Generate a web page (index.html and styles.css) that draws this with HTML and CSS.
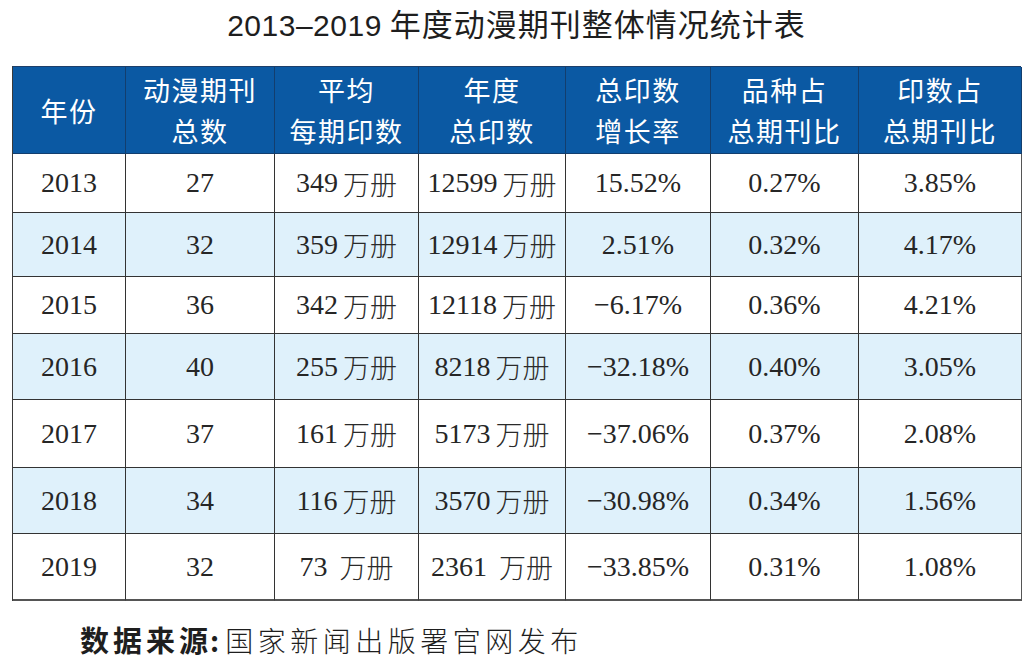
FILE: index.html
```html
<!DOCTYPE html>
<html lang="zh-CN">
<head>
<meta charset="utf-8">
<title>2013–2019年度动漫期刊整体情况统计表</title>
<link rel="stylesheet" href="styles.css">
</head>
<body>
<div class="page">
  <h1 class="title"><span class="num">2013–2019</span> 年度动漫期刊整体情况统计表</h1>
  <div class="table">
    <div class="row head">
      <div class="cell">年份</div>
      <div class="cell">动漫期刊<br>总数</div>
      <div class="cell">平均<br>每期印数</div>
      <div class="cell">年度<br>总印数</div>
      <div class="cell">总印数<br>增长率</div>
      <div class="cell">品种占<br>总期刊比</div>
      <div class="cell">印数占<br>总期刊比</div>
    </div>
    <div class="row">
      <div class="cell">2013</div><div class="cell">27</div>
      <div class="cell">349<span class="u">万册</span></div>
      <div class="cell">12599<span class="u">万册</span></div>
      <div class="cell">15.52%</div><div class="cell">0.27%</div><div class="cell">3.85%</div>
    </div>
    <div class="row alt">
      <div class="cell">2014</div><div class="cell">32</div>
      <div class="cell">359<span class="u">万册</span></div>
      <div class="cell">12914<span class="u">万册</span></div>
      <div class="cell">2.51%</div><div class="cell">0.32%</div><div class="cell">4.17%</div>
    </div>
    <div class="row">
      <div class="cell">2015</div><div class="cell">36</div>
      <div class="cell">342<span class="u">万册</span></div>
      <div class="cell">12118<span class="u">万册</span></div>
      <div class="cell">−6.17%</div><div class="cell">0.36%</div><div class="cell">4.21%</div>
    </div>
    <div class="row alt">
      <div class="cell">2016</div><div class="cell">40</div>
      <div class="cell">255<span class="u">万册</span></div>
      <div class="cell">8218<span class="u">万册</span></div>
      <div class="cell">−32.18%</div><div class="cell">0.40%</div><div class="cell">3.05%</div>
    </div>
    <div class="row">
      <div class="cell">2017</div><div class="cell">37</div>
      <div class="cell">161<span class="u">万册</span></div>
      <div class="cell">5173<span class="u">万册</span></div>
      <div class="cell">−37.06%</div><div class="cell">0.37%</div><div class="cell">2.08%</div>
    </div>
    <div class="row alt">
      <div class="cell">2018</div><div class="cell">34</div>
      <div class="cell">116<span class="u">万册</span></div>
      <div class="cell">3570<span class="u">万册</span></div>
      <div class="cell">−30.98%</div><div class="cell">0.34%</div><div class="cell">1.56%</div>
    </div>
    <div class="row">
      <div class="cell">2019</div><div class="cell">32</div>
      <div class="cell">73<span class="u wide">万册</span></div>
      <div class="cell">2361<span class="u wide">万册</span></div>
      <div class="cell">−33.85%</div><div class="cell">0.31%</div><div class="cell">1.08%</div>
    </div>
  </div>
  <p class="source"><span class="label">数据来源</span><span class="colon">:</span><span class="org">国家新闻出版署官网发布</span></p>
</div>
</body>
</html>
```
FILE: styles.css
```css
html, body {
  margin: 0;
  padding: 0;
  background: #ffffff;
}

.page {
  width: 1033px;
  height: 667px;
  overflow: hidden;
  display: flex;
  flex-direction: column;
}

.title {
  margin: 0 0 22px 0;
  height: 44px;
  line-height: 46px;
  text-align: center;
  font-family: "Noto Sans CJK SC", "Noto Sans", sans-serif;
  font-weight: 400;
  font-size: 31px;
  color: #1e1e1e;
  letter-spacing: 1px;
}

.title .num {
  font-family: "Liberation Sans", "Noto Sans", sans-serif;
  font-size: 30px;
  letter-spacing: 0.5px;
}

.table {
  margin-left: 12px;
  width: 1009px;
  display: grid;
  grid-template-columns: 113px 149px 144px 147px 145px 148px 163px;
  grid-template-rows: 87px 59px 64px 57px 66px 68px 66px 67px;
  border-left: 1px solid #3a3a3a;
  border-top: 1px solid #1d3f6a;
  box-sizing: border-box;
}

.row {
  display: contents;
}

.cell {
  box-sizing: border-box;
  border-right: 1px solid #333;
  border-bottom: 1px solid #333;
  display: flex;
  align-items: center;
  justify-content: center;
  text-align: center;
  font-family: "Liberation Serif", "Noto Sans CJK SC", serif;
  font-size: 28px;
  color: #262626;
  background: #ffffff;
}

.row > .cell:last-child {
  border-right: 1.5px solid #555;
}

.row:last-child > .cell {
  border-bottom: 2px solid #555;
}

.row.alt > .cell {
  background: #dff1fb;
}

.row.head > .cell {
  background: #0b59a3;
  color: #ffffff;
  font-family: "Noto Sans CJK SC", "Noto Sans", sans-serif;
  font-size: 27px;
  line-height: 41px;
  letter-spacing: 1.5px;
  border-right: 1px solid #133e6e;
  border-bottom: 1px solid #133e6e;
}

.u {
  font-family: "Noto Sans CJK SC", sans-serif;
  font-weight: 300;
  font-size: 27px;
  margin-left: 5px;
  color: #2a2a2a;
}

.u.wide {
  margin-left: 12px;
}

.source {
  margin: 22px 0 0 80px;
  line-height: 32px;
  font-size: 28px;
  color: #1e1e1e;
  font-family: "Noto Sans CJK SC", sans-serif;
}

.label {
  font-weight: 700;
  font-size: 29px;
  letter-spacing: 4px;
}

.colon {
  font-weight: 700;
  margin: 0 6px 0 -2px;
}

.org {
  font-weight: 300;
  letter-spacing: 4.5px;
}
```
